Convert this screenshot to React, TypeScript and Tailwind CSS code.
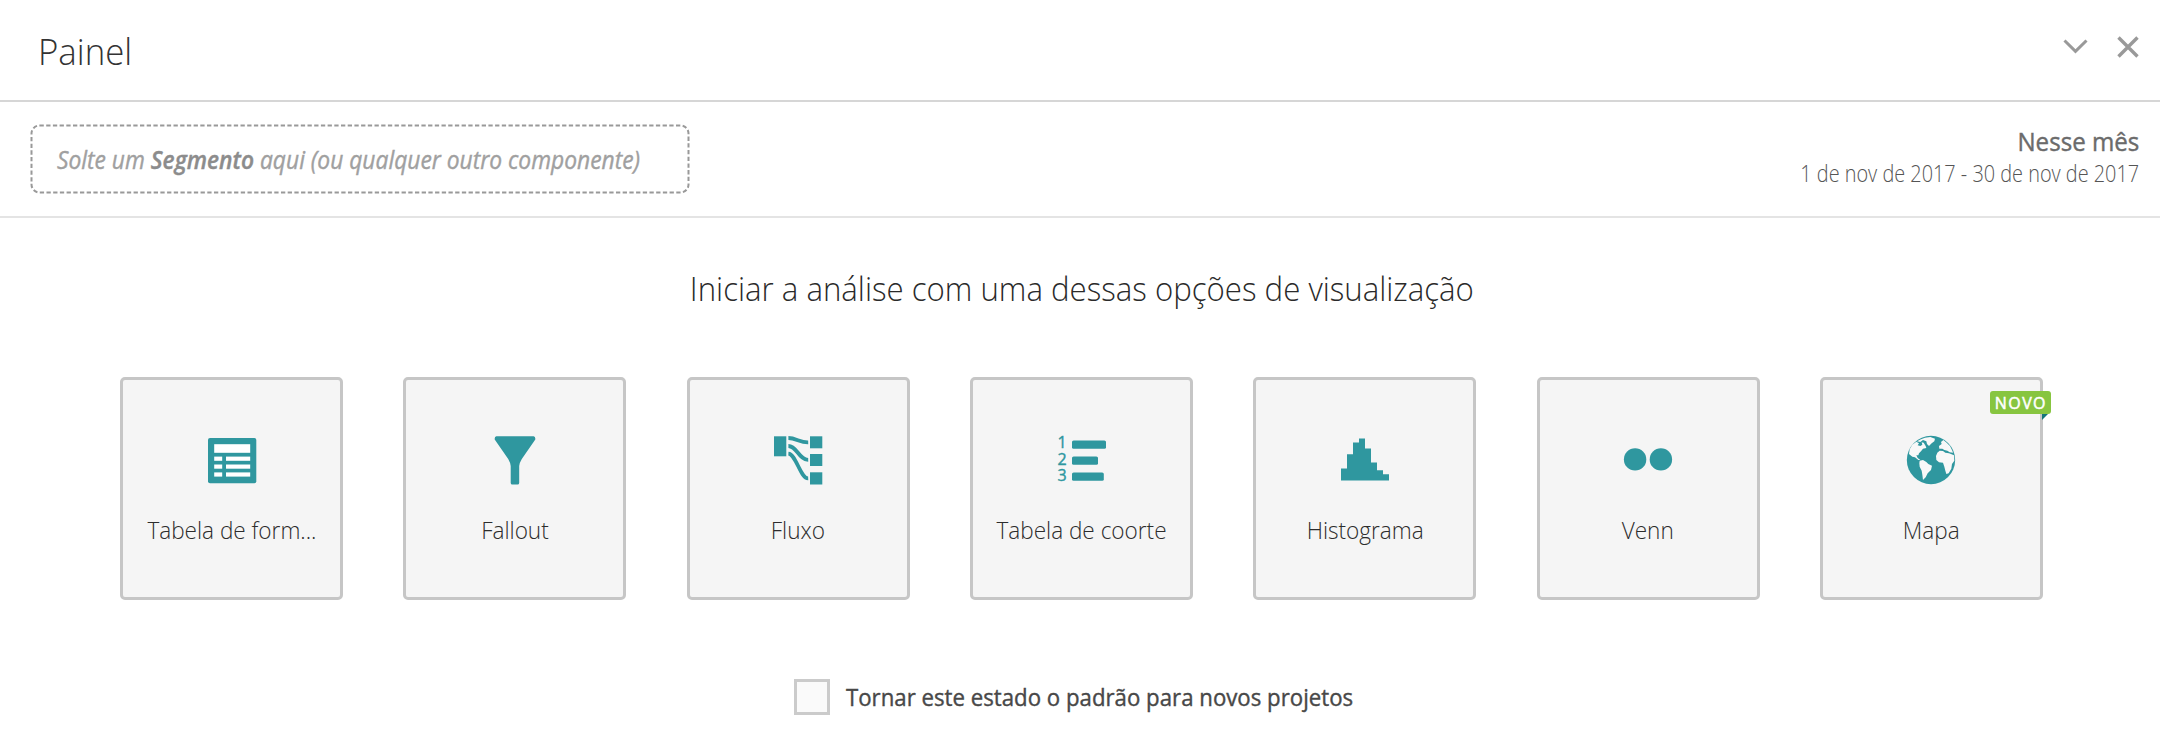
import type { ReactNode } from "react";

type Option = { label: string; icon: ReactNode; isNew?: boolean };

const svgClass = "h-12 w-12 overflow-visible fill-[#2f979f]";

const TableIcon = () => (
  <svg viewBox="0 0 48 48" className={svgClass}>
    <rect x="0" y="2" width="48.3" height="45.3" rx="2" />
    <g fill="#fff">
      <rect x="6.2" y="8.2" width="36" height="8.6" />
      {[20.6, 28.5, 36.4].map((y) => (
        <g key={y}>
          <rect x="6.2" y={y} width="8" height="4.2" />
          <rect x="18" y={y} width="24.2" height="4.2" />
        </g>
      ))}
    </g>
  </svg>
);

const FunnelIcon = () => (
  <svg viewBox="0 0 48 48" className={svgClass}>
    <path d="M5.4 .2H42.6Q44.6 .6 44.3 3.4L30.8 23Q28.6 26.5 28.2 30V47Q28 48.5 26.6 48.5H21.2Q19.8 48.5 19.7 47V30Q19.3 26.5 17.2 23L3.7 3.4Q3.4 .6 5.4 .2Z" />
  </svg>
);

const FlowIcon = () => (
  <svg viewBox="0 0 48 48" className={svgClass}>
    <rect x="0" y="0.3" width="12.3" height="20" />
    <rect x="36" y="0.3" width="12.3" height="12" />
    <rect x="36" y="18" width="12.3" height="12" />
    <rect x="36" y="36.3" width="12.3" height="12.2" />
    <g fill="none" stroke="#2f979f" strokeWidth="3.8">
      <path d="M14.4 2C22 2 26 6.6 34.2 6.4" />
      <path d="M14.4 10C23 10 25 24 34.2 23.8" />
      <path d="M14.4 17.6C22 18 26.5 42.8 34.2 42.4" />
    </g>
  </svg>
);

const CohortIcon = () => (
  <svg viewBox="0 0 48 48" className={svgClass}>
    <rect x="14" y="4.4" width="34" height="8.4" rx="1.6" />
    <rect x="14" y="20.4" width="26" height="8.4" rx="1.6" />
    <rect x="14" y="36.4" width="31.8" height="8.4" rx="1.6" />
    <g className="stroke-[#2f979f] stroke-[0.4] font-['Open_Sans'] text-[16px]">
      <text x="-0.6" y="12.4">1</text>
      <text x="-0.6" y="28.8">2</text>
      <text x="-0.6" y="45">3</text>
    </g>
  </svg>
);

const HistogramIcon = () => (
  <svg viewBox="0 0 48 48" className={svgClass}>
    <path d="M0 44.6V32.5H6V18.2H12V6.4H18V2.4H24V12.4H30V26.4H36V34.2H42V38.2H48V44.6Z" />
  </svg>
);

const VennIcon = () => (
  <svg viewBox="0 0 48 48" className={svgClass}>
    <circle cx="11.1" cy="23.4" r="11.2" />
    <circle cx="36.9" cy="23.4" r="11.2" />
  </svg>
);

const GlobeIcon = () => (
  <svg viewBox="22 18 144 144" className={svgClass}>
    <circle cx="94" cy="90" r="72.5" />
    <g fill="#f8f8f8">
      <path d="M28 72L30 58L38 44L50 35L58 40L54 46L62 48L68 44L66 37L72 38L78 48L80 54L70 56L64 64L58 70L56 76L50 76L54 84L62 90L56 90L46 82L38 80Z" />
      <path d="M52 34L64 28L76 23L92 21L106 26L104 34L96 40L88 48L82 42L80 34L70 30L62 36Z" />
      <path d="M60 92L70 90L80 96L86 102L97 107L94 120L84 130L78 142L70 150L68 134L66 122L60 110L59 100Z" />
      <path d="M119 56L118 48L126 42L124 36L131 30L141 38L151 48L158 62L160 68L150 67L143 62L134 60L128 56Z" />
      <path d="M113 68L120 62L130 63L137 68L148 70L154 72L163 76L164 92L157 102L155 116L147 130L140 132L137 122L134 110L130 98L118 97L110 90L109 78Z" />
    </g>
  </svg>
);

const options: Option[] = [
  { label: "Tabela de form...", icon: <TableIcon /> },
  { label: "Fallout", icon: <FunnelIcon /> },
  { label: "Fluxo", icon: <FlowIcon /> },
  { label: "Tabela de coorte", icon: <CohortIcon /> },
  { label: "Histograma", icon: <HistogramIcon /> },
  { label: "Venn", icon: <VennIcon /> },
  { label: "Mapa", icon: <GlobeIcon />, isNew: true },
];

function OptionCard({ label, icon, isNew }: Option) {
  return (
    <button className="relative flex h-[223px] w-[223px] flex-col items-center rounded-[5px] border-[3px] border-[#c6c6c6] bg-[#f5f5f5] pt-[56px]">
      {icon}
      <span className="mt-[28px] scale-x-[0.94] text-[24px] leading-9 font-light whitespace-nowrap text-[#2c2c2c]">
        {label}
      </span>
      {isNew && (
        <span className="absolute top-[11px] -right-[11px] flex h-[23px] w-[61px] items-center justify-center rounded-[3px] bg-[#87c540] pl-px text-[16px] tracking-[1.4px] text-white [-webkit-text-stroke:0.5px_#fff]">
          NOVO
          <svg viewBox="0 0 6 6" className="absolute top-[23px] right-[3px] h-[6px] w-[6px] fill-[#14757a]">
            <path d="M0 0H6L0 6Z" />
          </svg>
        </span>
      )}
    </button>
  );
}

export default function App() {
  return (
    <div className="h-[740px] w-[2160px] overflow-hidden bg-white font-['Open_Sans',sans-serif]">
      <header className="flex h-[102px] justify-between border-b-2 border-[#d6d6d6] pr-[21px] pl-[38px]">
        <h1 className="mt-[24px] origin-left scale-x-[0.94] text-[37px] leading-[54px] font-light text-[#333]">Painel</h1>
        <div className="flex gap-[29px] pt-[36px]">
          <svg viewBox="0 0 25 21" className="h-[21px] w-[25px] fill-none stroke-[#999] stroke-[3]">
            <path d="M1.5 4.5L12.5 15.3L23.5 4.5" />
          </svg>
          <svg viewBox="0 0 22 22" className="h-[22px] w-[22px] fill-none stroke-[#999] stroke-[3.4]">
            <path d="M1.5 1.5L20.5 20.5M20.5 1.5L1.5 20.5" />
          </svg>
        </div>
      </header>

      <section className="flex h-[116px] justify-between border-b-2 border-[#e4e4e4] pr-[21px] pl-[30px]">
        <div className="relative mt-[22px] flex h-[70px] w-[660px] items-center pl-[27px]">
          <svg className="absolute inset-0 h-[70px] w-[660px] fill-none stroke-[#999] stroke-2">
            <rect x="1.5" y="1.5" width="657" height="67" rx="8" strokeDasharray="4.3 2.4" />
          </svg>
          <span className="origin-left scale-x-[0.912] text-[25px] leading-9 whitespace-nowrap text-[#a0a0a0] italic [-webkit-text-stroke:0.4px]">
            Solte um <b className="font-semibold text-[#8c8c8c]">Segmento</b> aqui (ou qualquer outro componente)
          </span>
        </div>
        <div className="flex flex-col items-end pt-[21px]">
          <span className="origin-right scale-x-[0.965] text-[25px] leading-[36px] whitespace-nowrap text-[#6b6b6b] [-webkit-text-stroke:0.4px]">Nesse mês</span>
          <span className="-mt-[2px] origin-right scale-x-[0.864] text-[23px] leading-[32px] font-light whitespace-nowrap text-[#555]">
            1 de nov de 2017 - 30 de nov de 2017
          </span>
        </div>
      </section>

      <main className="flex flex-col items-center">
        <h2 className="mt-[47px] ml-[4px] scale-x-[0.945] text-[33px] leading-[48px] font-light whitespace-nowrap text-[#2a2a2a]">
          Iniciar a análise com uma dessas opções de visualização
        </h2>
        <div className="mt-[64px] ml-[3px] flex gap-[60.3px]">
          {options.map((option) => (
            <OptionCard key={option.label} {...option} />
          ))}
        </div>
        <label className="mt-[79px] flex w-[572px] items-center gap-[16px]">
          <span className="h-[36px] w-[36px] shrink-0 border-[3px] border-[#cbcbcb] bg-[#fafafa]" />
          <span className="origin-left scale-x-[0.926] text-[24px] leading-9 whitespace-nowrap text-[#484848] [-webkit-text-stroke:0.4px]">
            Tornar este estado o padrão para novos projetos
          </span>
        </label>
      </main>
    </div>
  );
}
